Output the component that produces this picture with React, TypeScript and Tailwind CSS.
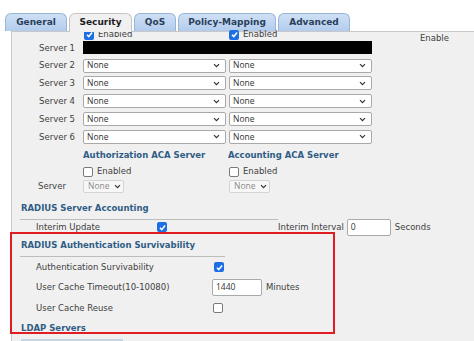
const label = "text-[#404040] text-[8.5px] font-['DejaVu_Sans',Verdana,sans-serif]";
const head = "text-[#2f5d85] text-[8.5px] font-bold font-['DejaVu_Sans',Verdana,sans-serif]";

function Check({ on }: { on?: boolean }) {
  if (on) {
    return (
      <span className="inline-flex w-[10px] h-[10px] shrink-0 rounded-[2px] bg-[#1b6fe2] items-center justify-center">
        <svg viewBox="0 0 10 10" className="w-[9px] h-[9px]">
          <path d="M2.2 5.3 4.2 7.3 7.9 2.7" fill="none" stroke="white" strokeWidth="1.7" />
        </svg>
      </span>
    );
  }
  return <span className="inline-block w-[10px] h-[10px] shrink-0 rounded-[2px] bg-white border border-[#7a7a7a]" />;
}

function Chevron() {
  return (
    <svg viewBox="0 0 8 6" className="w-[7px] h-[5px]">
      <path d="M1 1.3 4 4.3 7 1.3" fill="none" stroke="#333" strokeWidth="1.4" />
    </svg>
  );
}

function Select() {
  return (
    <div className="w-[143px] h-[14px] bg-white border border-[#a9a9a9] rounded-[2px] flex items-center justify-between pl-[3px] pr-[5px]">
      <span className="text-[8.5px] text-[#333] font-['Open_Sans',sans-serif]">None</span>
      <Chevron />
    </div>
  );
}

function SmallSelect() {
  return (
    <div className="w-[41px] h-[13px] bg-[#f7f7f7] border border-[#d4d4d4] rounded-[2px] flex items-center gap-[4px] pl-[4px]">
      <span className="text-[8.5px] text-[#8a8a8a] font-['Open_Sans',sans-serif]">None</span>
      <Chevron />
    </div>
  );
}

function Input({ value, w }: { value: string; w: string }) {
  return (
    <div className={`${w} h-[17px] bg-white border border-[#a9a9a9] rounded-[2px] flex items-center pl-[3px]`}>
      <span className="text-[8.5px] text-[#333] font-['Open_Sans',sans-serif]">{value}</span>
    </div>
  );
}

function Tab({ name, w, active }: { name: string; w: string; active?: boolean }) {
  return (
    <div
      className={
        active
          ? `${w} h-[19px] -mb-px relative z-10 rounded-t-[6px] border border-b-0 border-[#c4c4c4] bg-[#f0f0f0] flex items-center justify-center text-[9px] font-bold text-[#1c1c1c]`
          : `${w} h-[18px] rounded-t-[6px] border border-b-0 border-[#97b6da] bg-gradient-to-b from-[#cfe0f5] to-[#b3cced] flex items-center justify-center text-[9px] font-bold text-[#2a3f59]`
      }
    >
      {name}
    </div>
  );
}

const servers = ["Server 2", "Server 3", "Server 4", "Server 5", "Server 6"];

export default function App() {
  return (
    <div className="w-[474px] h-[341px] overflow-hidden bg-white relative font-['DejaVu_Sans',Verdana,sans-serif]">
      <div className="flex items-end gap-[2px] pt-[13px] pl-[5px]">
        <Tab name="General" w="w-[62px]" />
        <Tab name="Security" w="w-[63px]" active />
        <Tab name="QoS" w="w-[42px]" />
        <Tab name="Policy-Mapping" w="w-[98px]" />
        <Tab name="Advanced" w="w-[72px]" />
      </div>

      <div className="ml-[11px] border-t border-l border-[#c8c8c8] bg-[#f0f0f0] h-[320px]">
        {/* enabled header row */}
        <div className="h-[7px] flex">
          <div className="flex items-center h-[7px] -mt-[1px]">
            <div className="w-[72px]" />
            <div className="w-[145px] flex items-center gap-[4px]">
              <Check on />
              <span className={label}>Enabled</span>
            </div>
            <div className="w-[191px] flex items-center gap-[4px]">
              <Check on />
              <span className={label}>Enabled</span>
            </div>
            <span className={`${label} mt-[7px]`}>Enable</span>
          </div>
        </div>

        <div className="h-[17.8px] flex items-center">
          <div className={`${label} w-[63px] text-right`}>Server 1</div>
          <div className="ml-[8px] w-[289px] h-[13px] bg-black" />
        </div>
        {servers.map((s) => (
          <div key={s} className="h-[17.8px] flex items-center">
            <div className={`${label} w-[63px] text-right`}>{s}</div>
            <div className="ml-[8px] flex gap-[3px]">
              <Select />
              <Select />
            </div>
          </div>
        ))}

        <div className="h-[20px] flex items-center pl-[71px]">
          <div className={`${head} w-[145px]`}>Authorization ACA Server</div>
          <div className={head}>Accounting ACA Server</div>
        </div>
        <div className="h-[12px] flex items-center pl-[71px]">
          <div className="w-[146px] flex items-center gap-[4px]">
            <Check />
            <span className={label}>Enabled</span>
          </div>
          <div className="flex items-center gap-[4px]">
            <Check />
            <span className={label}>Enabled</span>
          </div>
        </div>
        <div className="h-[18px] flex items-center">
          <div className={`${label} w-[71px] pl-[26px]`}>Server</div>
          <div className="w-[146px]">
            <SmallSelect />
          </div>
          <SmallSelect />
        </div>

        <div className="mt-[2px] ml-[8px] w-[258px] h-[22px] border-b border-[#bdbdbd] flex items-center">
          <span className={`${head} pl-[1px]`}>RADIUS Server Accounting</span>
        </div>
        <div className="h-[15px] flex items-center">
          <div className={`${label} w-[145px] pl-[24px]`}>Interim Update</div>
          <Check on />
          <div className={`${label} ml-[111px]`}>Interim Interval</div>
          <div className="ml-[3px]">
            <Input value="0" w="w-[44px]" />
          </div>
          <div className={`${label} ml-[4px]`}>Seconds</div>
        </div>

        <div className="ml-[8px] w-[205px] h-[22px] border-b border-[#bdbdbd] flex items-center">
          <span className={`${head} pl-[1px]`}>RADIUS Authentication Survivability</span>
        </div>
        <div className="h-[20.5px] flex items-center">
          <div className={`${label} w-[202px] pl-[24px]`}>Authentication Survivability</div>
          <Check on />
        </div>
        <div className="h-[20.5px] flex items-center">
          <div className={`${label} w-[200px] pl-[24px]`}>User Cache Timeout(10-10080)</div>
          <Input value="1440" w="w-[50px]" />
          <div className={`${label} ml-[4px]`}>Minutes</div>
        </div>
        <div className="h-[20.5px] flex items-center">
          <div className={`${label} w-[201px] pl-[24px]`}>User Cache Reuse</div>
          <Check />
        </div>
        <div className="h-[20.5px] flex items-center pl-[9px]">
          <span className={head}>LDAP Servers</span>
        </div>
        <div className="ml-[9px] w-[102px] h-[3px] bg-[#c7d3df]" />
      </div>

      {/* red annotation box */}
      <div className="absolute left-[10px] top-[232px] w-[325px] h-[102px] border-2 border-[#e11d24]" />
    </div>
  );
}
